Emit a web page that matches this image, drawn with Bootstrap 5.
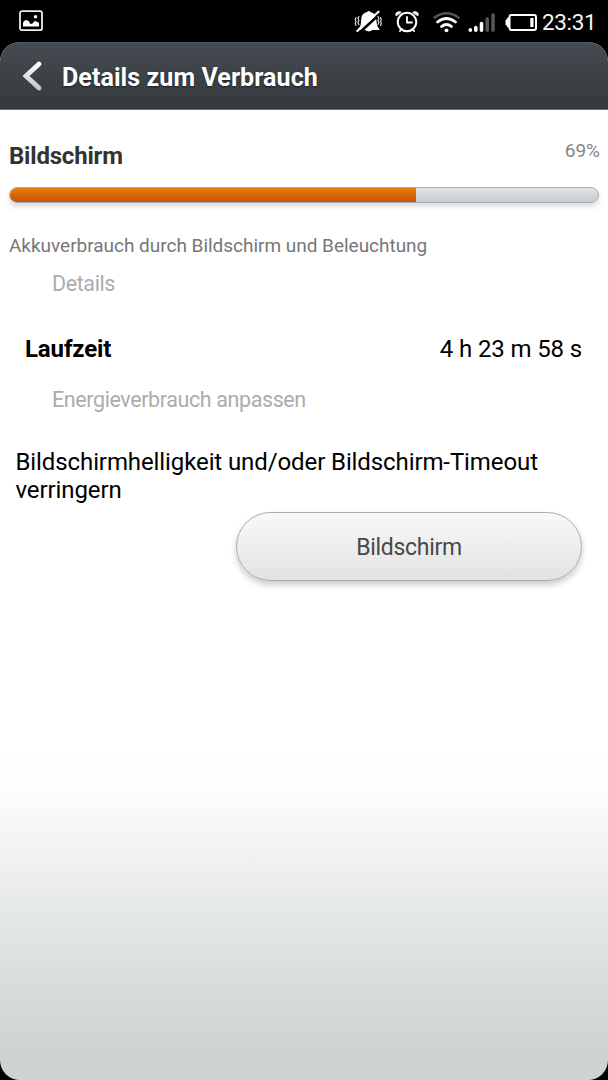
<!DOCTYPE html>
<html lang="de">
<head>
<meta charset="utf-8">
<meta name="viewport" content="width=device-width, initial-scale=1">
<title>Details zum Verbrauch</title>
<link href="https://cdn.jsdelivr.net/npm/bootstrap@5.3.0/dist/css/bootstrap.min.css" rel="stylesheet">
<style>
body{background:#000;font-family:Roboto,sans-serif;color:#000;overflow:hidden}
.status{height:42px;padding:0 12px 0 18px}
.clock{width:54px;font-size:22.5px;line-height:42px;padding-top:2px;color:#f4f4f4;letter-spacing:-.35px;white-space:nowrap}
.screen{height:1038px;border-radius:20px;overflow:hidden;background:linear-gradient(#fff 0,#fff 705px,#fdfdfd 745px,#ced3d3 1000px,#cdd2d2)}
.titlebar{height:68px;border-bottom:1px solid #6d7173;padding-left:22px;
 background:repeating-linear-gradient(90deg,rgba(255,255,255,.025) 0 1px,transparent 1px 4px),repeating-linear-gradient(rgba(0,0,0,.04) 0 1px,transparent 1px 3px),linear-gradient(#454c51,#33383c);box-shadow:inset 0 1px #51585c}
.titlebar h1{font-size:25px;line-height:67px;margin:3px 0 0 19px;font-weight:700;color:#fff;letter-spacing:.08px;text-shadow:0 1px 2px #0008}
.summary{padding:28px 8px 0 9px;height:77px}
.summary h2{font-size:24px;line-height:36px;font-weight:700;color:#333;letter-spacing:-.2px}
.percent{font-size:19px;line-height:25px;color:#858585}
.usage{height:16px;margin:0 9px;border-radius:8px;border:1px solid #a9aeb0;background:linear-gradient(#dfe4e6,#c5cbcd);box-shadow:0 4px 5px #0002}
.usage .progress-bar{background:linear-gradient(#eb7e08,#c75006);border-radius:0;margin:-1px 0 -1px -1px}
.desc{font-size:19px;line-height:26px;margin:30px 9px 0;color:#777;letter-spacing:-.02px}
.section-label{font-size:21.5px;line-height:28px;padding-left:52px;color:#acacac;letter-spacing:-.4px}
.details-label{margin-top:11px}
.adjust-label{margin-top:20px}
.runtime{font-size:24px;line-height:34px;padding:0 26px 0 25px;margin-top:34px;letter-spacing:-.13px}
.tip{font-size:24px;line-height:27.6px;padding:0 15.5px;margin:35px 0 0;letter-spacing:-.1px}
.pill{width:346px;height:69px;margin:8px 26px 0 0;padding:3px 0 0;font-size:23px;letter-spacing:-.3px;color:#484848;border:1px solid #aaa;border-radius:35px;background:linear-gradient(#f9f9f9,#e2e2e2);box-shadow:0 4px 6px #0003}
</style>
</head>
<body>
<header class="status d-flex align-items-center">
 <svg width="26" height="22" viewBox="0 0 26 22" fill="none"><rect x="2" y="1.200" width="22" height="19" rx="2" stroke="#eee" stroke-width="1.800"/><path d="M5 16.500v-4q1-2.500 3.500-2.500 2.500.5 4 4l2-.5q2.500-3.500 4-2 2 .5 2.500 1.500v3.500z" fill="#fff"/><circle cx="17.500" cy="6.700" r="1.700" fill="#fff"/></svg>
 <svg class="ms-auto" width="188" height="42" viewBox="354 0 188 42" fill="none" stroke-linecap="round">
  <path d="M358 29q3-2 3-8 0-8 6-9 1.500-1.800 3.500 0 5.500 1 6 9 .3 6 3 8v1H372.500q-3.500 2.800-7.500 0h-7z" fill="#fff"/>
  <path d="M358.500 33.500 382 12" stroke="#000" stroke-width="2.600" stroke-linecap="butt"/>
  <path d="M357.300 31 378.500 11.700" stroke="#fff" stroke-width="2.200"/>
  <path d="m358.900 16.500-1 2 1 2-1 2 1 2M356 17.500l-.8 2 .8 2-.8 2 .8 2M377.900 16.500l1 2-1 2 1 2-1 2M380.600 17.500l.7 2-.7 2 .7 2-.7 2" stroke="#ddd" stroke-width="1.200"/>
  <circle cx="407" cy="22" r="9.300" stroke="#fff" stroke-width="2.100"/>
  <path d="M407 17v5.500h5" stroke="#fff" stroke-width="1.800"/>
  <path d="M396 15.500q-1-3 2-3.500 2-.8 3 .2zM418 15.500q1-3-2-3.500-2-.8-3 .2z" fill="#fff" stroke="#fff"/>
  <path d="m401.500 29-1.500 2M412.500 29l1.500 2" stroke="#fff" stroke-width="2"/>
  <path d="M434.500 17.500q12-8.500 24 0" stroke="#555" stroke-width="2.500"/>
  <path d="M437.500 22q9-7 18 0M441.500 26.500q5-4 10 0" stroke="#fff" stroke-width="2.800"/>
  <circle cx="446.500" cy="30.300" r="1.900" fill="#fff"/>
  <path d="M470.300 29.700v.6M475.800 27.500v2.800M481.500 23.500v6.800" stroke="#fff" stroke-width="3.600"/>
  <path d="M487.200 19v11.300M493 15v15.300" stroke="#555" stroke-width="3.600"/>
  <rect x="509.500" y="15" width="26.500" height="15" rx="2" stroke="#fff" stroke-width="2"/>
  <path d="M509 18h-1.500v2H506v5h1.500v2h1.500z" fill="#fff" stroke="#fff"/>
  <path d="M530.300 18h3.200v9h-3.200z" fill="#fff"/>
 </svg>
 <span class="clock">23:31</span>
</header>
<main class="screen">
 <div class="titlebar d-flex align-items-center">
  <svg width="21" height="32" viewBox="0 0 21 32" fill="none"><defs><linearGradient id="arrow" x2="0" y2="1"><stop stop-color="#fff"/><stop offset="1" stop-color="#c5c9cb"/></linearGradient></defs><path d="M17 4 4 16 17 28" stroke="url(#arrow)" stroke-width="4.800" stroke-linecap="round"/></svg>
  <h1>Details zum Verbrauch</h1>
 </div>
 <div class="summary d-flex justify-content-between align-items-start">
  <h2 class="m-0">Bildschirm</h2><span class="percent">69%</span>
 </div>
 <div class="progress usage" role="progressbar" aria-valuenow="69"><div class="progress-bar" style="width:69.2%"></div></div>
 <p class="desc mb-0">Akkuverbrauch durch Bildschirm und Beleuchtung</p>
 <div class="section-label details-label">Details</div>
 <div class="runtime d-flex justify-content-between"><strong>Laufzeit</strong><span>4 h 23 m 58 s</span></div>
 <div class="section-label adjust-label">Energieverbrauch anpassen</div>
 <p class="tip">Bildschirmhelligkeit und/oder Bildschirm-Timeout verringern</p>
 <div class="d-flex justify-content-end"><button class="btn pill">Bildschirm</button></div>
</main>
<script src="https://cdn.jsdelivr.net/npm/bootstrap@5.3.0/dist/js/bootstrap.bundle.min.js"></script>
</body>
</html>
